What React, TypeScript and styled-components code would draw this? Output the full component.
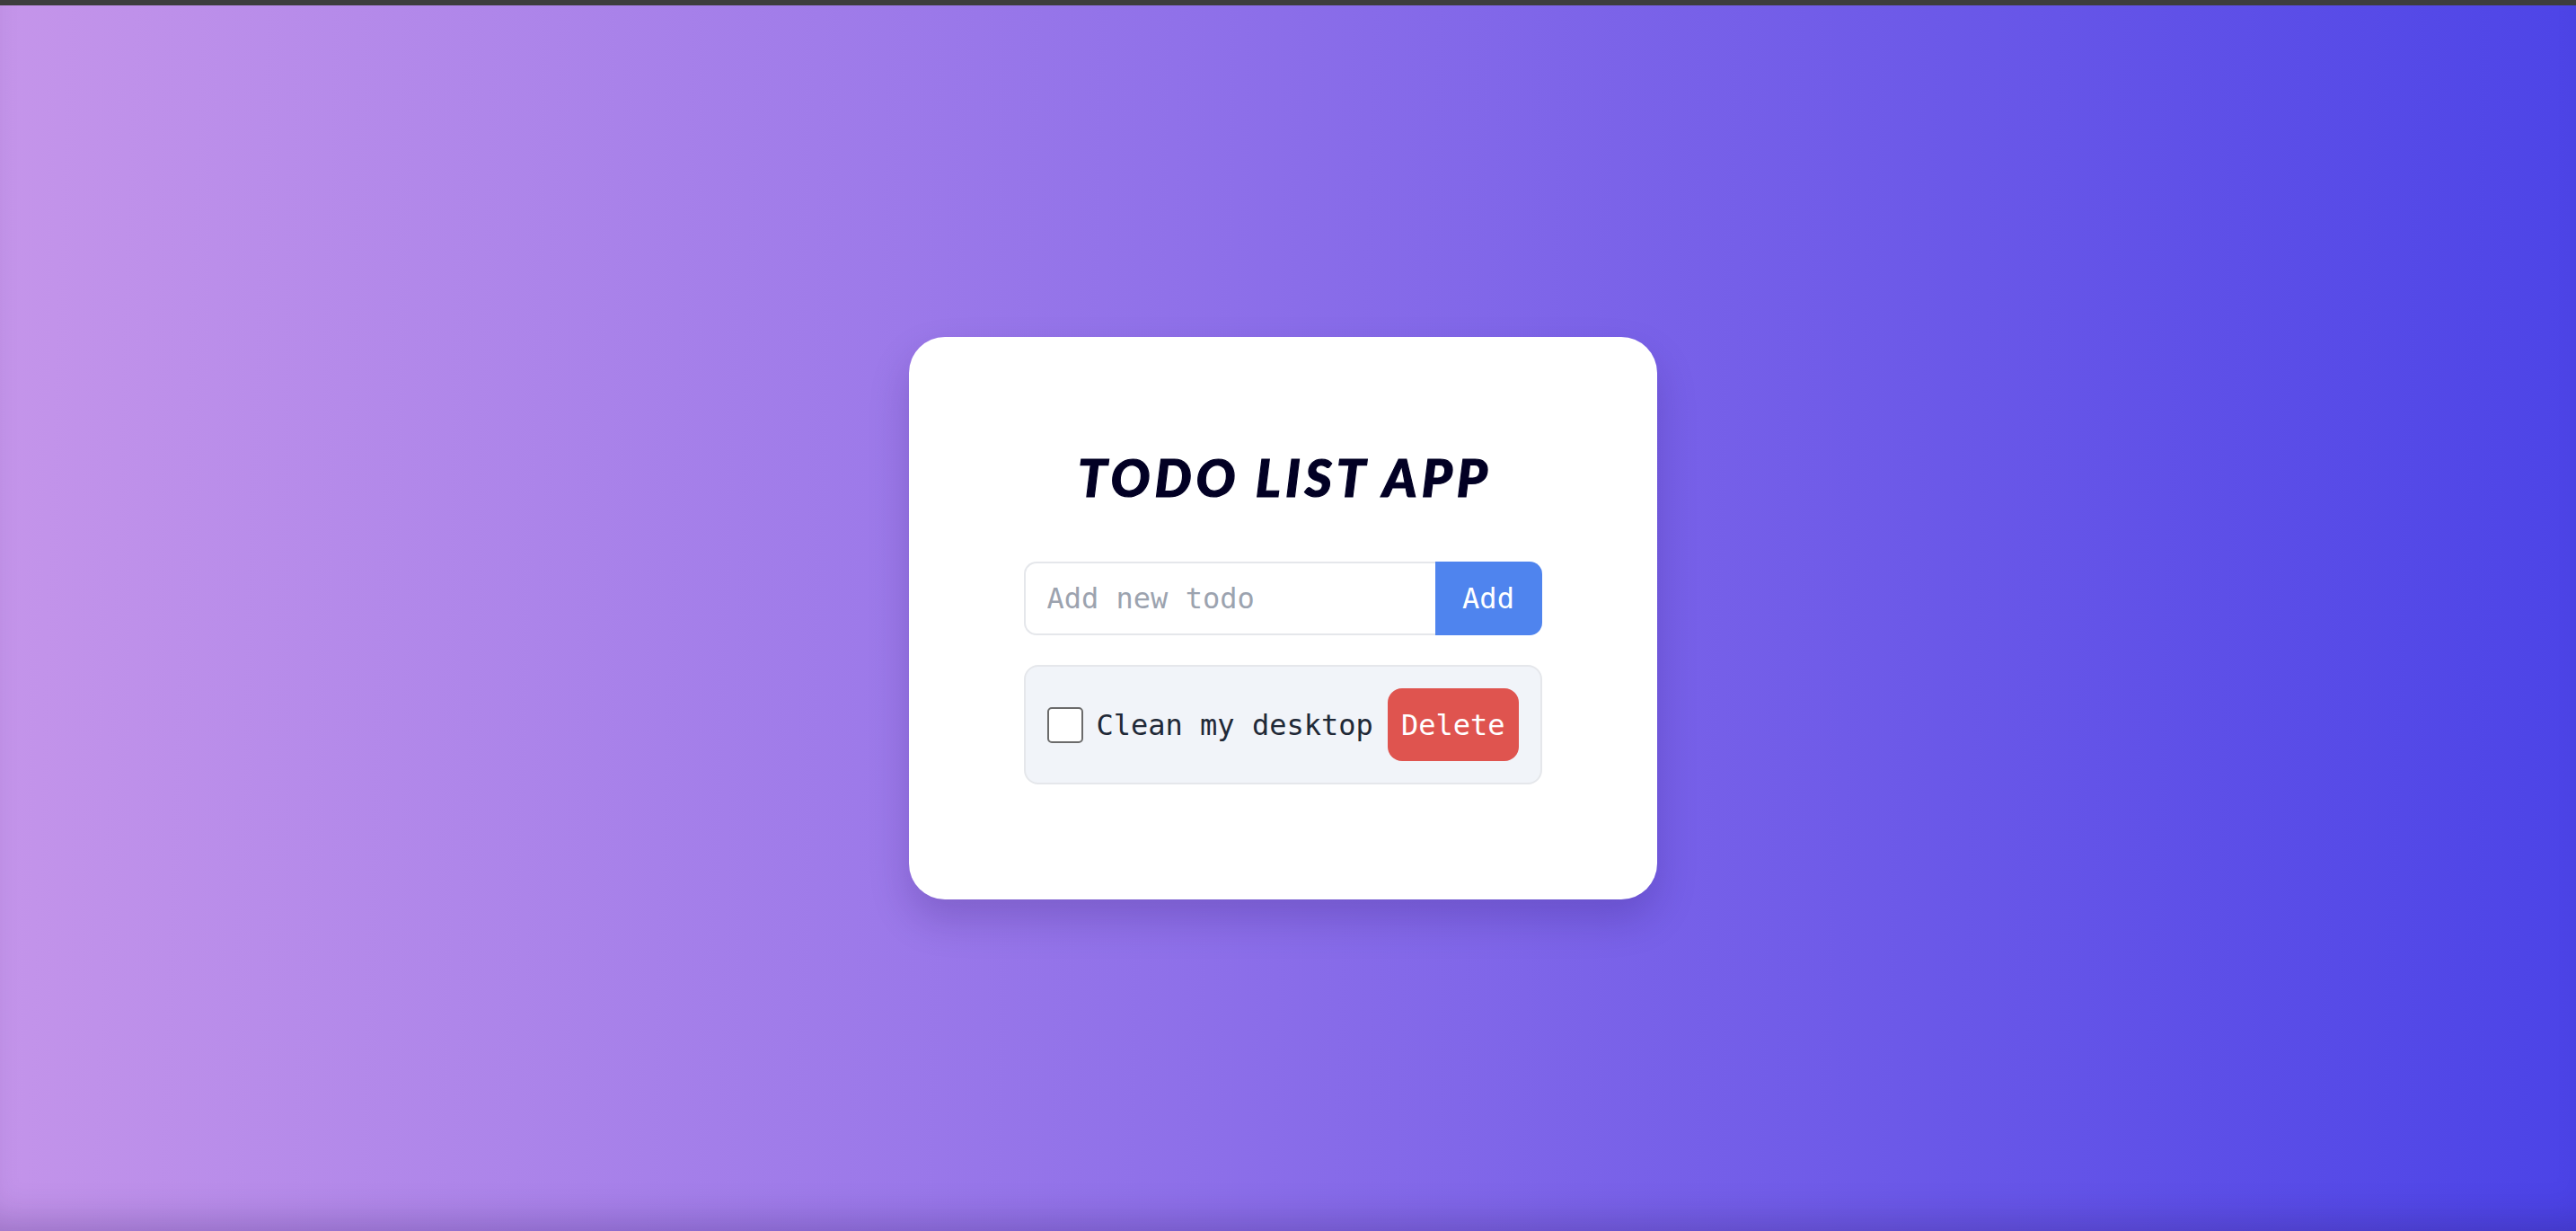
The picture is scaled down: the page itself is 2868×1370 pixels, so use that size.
import React, { useState } from "react";
import styled, { createGlobalStyle } from "styled-components";

const GlobalStyle = createGlobalStyle`
  html, body { margin: 0; padding: 0; }
  body { font-family: "DejaVu Sans Mono", "Liberation Mono", monospace; }
  * { box-sizing: border-box; }
`;

const Page = styled.div`
  min-height: 100vh;
  display: flex;
  flex-direction: column;
  background: linear-gradient(92deg, #c595ea 0%, #8a6de9 50%, #4b43e7 100%);
  box-shadow: inset 0 -34px 40px -24px rgba(40, 20, 90, 0.28);
`;

const TopBar = styled.div`
  height: 6px;
  background: #3d3d3d;
  flex-shrink: 0;
`;

const Main = styled.main`
  flex: 1;
  display: flex;
  align-items: center;
  justify-content: center;
  padding-right: 12px;
`;

const Card = styled.section`
  width: 833px;
  background: #ffffff;
  border-radius: 40px;
  padding: 128px;
  box-shadow: 0 22px 44px rgba(40, 20, 100, 0.22);
  display: flex;
  flex-direction: column;
`;

const Title = styled.h1`
  margin: 0 0 66px;
  padding-left: 5px;
  text-align: center;
  font-family: "Lato", "Noto Sans", sans-serif;
  font-style: italic;
  font-weight: 900;
  font-size: 58px;
  line-height: 56px;
  letter-spacing: 5px;
  color: #020024;
  -webkit-text-stroke: 1.2px #020024;
`;

const Form = styled.form`
  display: flex;
  height: 82px;
  margin-bottom: 33px;
`;

const Input = styled.input`
  flex: 1;
  min-width: 0;
  border: 2px solid #e5e7eb;
  border-right: none;
  border-radius: 14px 0 0 14px;
  padding: 0 24px;
  font-family: "DejaVu Sans Mono", monospace;
  font-size: 32px;
  color: #1f2937;
  outline: none;
  &::placeholder { color: #9ca3af; }
`;

const AddButton = styled.button`
  width: 119px;
  border: none;
  border-radius: 0 14px 14px 0;
  background: #4f84ee;
  color: #ffffff;
  font-family: "DejaVu Sans Mono", monospace;
  font-size: 32px;
  cursor: pointer;
`;

const List = styled.ul`
  list-style: none;
  margin: 0;
  padding: 0;
  display: flex;
  flex-direction: column;
  gap: 16px;
`;

const Item = styled.li`
  display: flex;
  align-items: center;
  gap: 15px;
  padding: 24px 24px;
  background: #f1f4f9;
  border: 2px solid #e5e7eb;
  border-radius: 16px;
`;

const Check = styled.span<{ $checked: boolean }>`
  width: 40px;
  height: 40px;
  flex-shrink: 0;
  border: 2px solid #6b6b6b;
  border-radius: 5px;
  background: ${(p) => (p.$checked ? "#4f84ee" : "#ffffff")};
  cursor: pointer;
`;

const Label = styled.span<{ $done: boolean }>`
  flex: 1;
  font-family: "DejaVu Sans Mono", monospace;
  font-size: 32px;
  color: #1f2937;
  white-space: nowrap;
  text-decoration: ${(p) => (p.$done ? "line-through" : "none")};
`;

const DeleteButton = styled.button`
  height: 81px;
  padding: 0 15px;
  border: none;
  border-radius: 16px;
  background: #df544f;
  color: #ffffff;
  font-family: "DejaVu Sans Mono", monospace;
  font-size: 32px;
  cursor: pointer;
`;

type Todo = { id: number; text: string; done: boolean };

export default function App() {
  const [todos, setTodos] = useState<Todo[]>([
    { id: 1, text: "Clean my desktop", done: false },
  ]);
  const [value, setValue] = useState("");

  const add = (e: React.FormEvent) => {
    e.preventDefault();
    if (!value.trim()) return;
    setTodos([...todos, { id: Date.now(), text: value.trim(), done: false }]);
    setValue("");
  };

  return (
    <>
      <GlobalStyle />
      <Page>
        <TopBar />
        <Main>
          <Card>
            <Title>TODO LIST APP</Title>
            <Form onSubmit={add}>
              <Input
                placeholder="Add new todo"
                value={value}
                onChange={(e) => setValue(e.target.value)}
              />
              <AddButton type="submit">Add</AddButton>
            </Form>
            <List>
              {todos.map((t) => (
                <Item key={t.id}>
                  <Check
                    $checked={t.done}
                    onClick={() =>
                      setTodos(todos.map((x) => (x.id === t.id ? { ...x, done: !x.done } : x)))
                    }
                  />
                  <Label $done={t.done}>{t.text}</Label>
                  <DeleteButton onClick={() => setTodos(todos.filter((x) => x.id !== t.id))}>
                    Delete
                  </DeleteButton>
                </Item>
              ))}
            </List>
          </Card>
        </Main>
      </Page>
    </>
  );
}
